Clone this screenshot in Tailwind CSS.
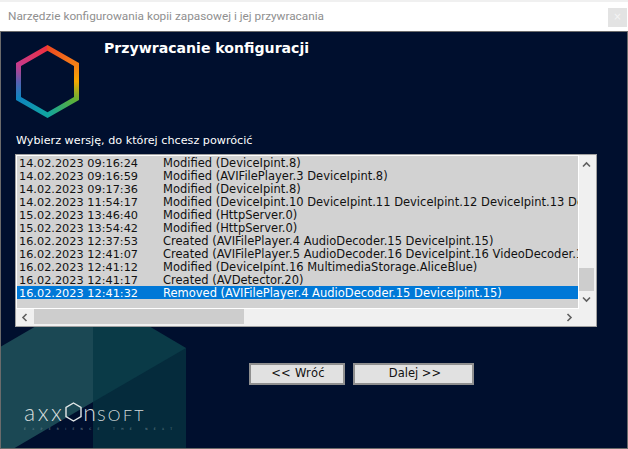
<!DOCTYPE html>
<html lang="en">
<head>
    <meta charset="UTF-8">
    <title>Narzędzie konfigurowania kopii zapasowej i jej przywracania</title>
    <script src="https://cdn.jsdelivr.net/npm/@tailwindcss/browser@4"></script>
</head>
<body class="bg-white font-['DejaVu_Sans',sans-serif] overflow-hidden">
    <div class="w-[628px] h-[449px] flex flex-col">
        <!-- Title bar -->
        <div class="h-[31px] shrink-0 bg-white border-t-2 border-[#f0f0f0] flex items-center justify-between pr-[1px]">
            <span class="pl-[8px] text-[11.8px] text-[#8f8f8f] font-['Roboto',sans-serif]">Narzędzie konfigurowania kopii zapasowej i jej przywracania</span>
            <div class="w-[19px] h-[19px] mt-[1px] bg-[#e3e3e3] flex items-center justify-center text-[10px] leading-none text-[#f4f4f4]">×</div>
        </div>

        <!-- Wizard body -->
        <div class="relative flex-1 bg-[#000f2e] border-t border-x border-[#6b6b6b] overflow-hidden">
            <svg class="absolute left-0 bottom-0" width="190" height="125" viewBox="1 323 190 125">
                <polygon points="93,293 186,348 186,449 93,449" fill="#0a3a47"/>
                <polygon points="186,348 186,449 93,449 93,402" fill="#052b3c"/>
                <polygon points="0,347 93,293 93,402 13,449 0,449" fill="#1b4854"/>
            </svg>

            <!-- Hexagon logo -->
            <div class="absolute left-[15px] top-[13px] w-[63px] h-[73px] bg-[conic-gradient(#ee4a20_0deg,#f58016_60deg,#f5a800_90deg,#5cb038_125deg,#10a5a0_180deg,#0f85c0_240deg,#5a5fb0_270deg,#c83a8a_300deg,#ee3040_360deg)] [clip-path:polygon(evenodd,31.5px_0,63px_18px,63px_55px,31.5px_73px,0_55px,0_18px,31.5px_0,31.5px_5.8px,5px_20.9px,5px_52.1px,31.5px_67.2px,58px_52.1px,58px_20.9px,31.5px_5.8px)]"></div>

            <h1 class="absolute left-[103px] top-[7px] text-[14.1px] leading-[18px] font-bold text-white">Przywracanie konfiguracji</h1>
            <p class="absolute left-[15px] top-[102px] text-[11.2px] leading-[14px] text-white">Wybierz wersję, do której chcesz powrócić</p>

            <!-- Version list -->
            <div class="absolute left-[14px] top-[122px] w-[582px] h-[173px] border border-[#a0a0a0] bg-[#f0f0f0] grid grid-cols-[1fr_17px] grid-rows-[1fr_17px]">
                <div class="bg-[#d2d2d2] overflow-hidden border border-white text-[11.5px] text-[#111]">
                    <div class="flex whitespace-nowrap pl-[2px] h-[13px] leading-[15px]"><span class="w-[144px] shrink-0 text-[11.3px]">14.02.2023 09:16:24</span><span>Modified (DeviceIpint.8)</span></div>
                    <div class="flex whitespace-nowrap pl-[2px] h-[13px] leading-[15px]"><span class="w-[144px] shrink-0 text-[11.3px]">14.02.2023 09:16:59</span><span>Modified (AVIFilePlayer.3 DeviceIpint.8)</span></div>
                    <div class="flex whitespace-nowrap pl-[2px] h-[13px] leading-[15px]"><span class="w-[144px] shrink-0 text-[11.3px]">14.02.2023 09:17:36</span><span>Modified (DeviceIpint.8)</span></div>
                    <div class="flex whitespace-nowrap pl-[2px] h-[13px] leading-[15px]"><span class="w-[144px] shrink-0 text-[11.3px]">14.02.2023 11:54:17</span><span>Modified (DeviceIpint.10 DeviceIpint.11 DeviceIpint.12 DeviceIpint.13 DeviceIpint.14)</span></div>
                    <div class="flex whitespace-nowrap pl-[2px] h-[13px] leading-[15px]"><span class="w-[144px] shrink-0 text-[11.3px]">15.02.2023 13:46:40</span><span>Modified (HttpServer.0)</span></div>
                    <div class="flex whitespace-nowrap pl-[2px] h-[13px] leading-[15px]"><span class="w-[144px] shrink-0 text-[11.3px]">15.02.2023 13:54:42</span><span>Modified (HttpServer.0)</span></div>
                    <div class="flex whitespace-nowrap pl-[2px] h-[13px] leading-[15px]"><span class="w-[144px] shrink-0 text-[11.3px]">16.02.2023 12:37:53</span><span>Created (AVIFilePlayer.4 AudioDecoder.15 DeviceIpint.15)</span></div>
                    <div class="flex whitespace-nowrap pl-[2px] h-[13px] leading-[15px]"><span class="w-[144px] shrink-0 text-[11.3px]">16.02.2023 12:41:07</span><span>Created (AVIFilePlayer.5 AudioDecoder.16 DeviceIpint.16 VideoDecoder.16)</span></div>
                    <div class="flex whitespace-nowrap pl-[2px] h-[13px] leading-[15px]"><span class="w-[144px] shrink-0 text-[11.3px]">16.02.2023 12:41:12</span><span>Modified (DeviceIpint.16 MultimediaStorage.AliceBlue)</span></div>
                    <div class="flex whitespace-nowrap pl-[2px] h-[13px] leading-[15px]"><span class="w-[144px] shrink-0 text-[11.3px]">16.02.2023 12:41:17</span><span>Created (AVDetector.20)</span></div>
                    <div class="flex whitespace-nowrap pl-[2px] h-[13px] leading-[15px] bg-[#0078d7] text-white"><span class="w-[144px] shrink-0 text-[11.3px]">16.02.2023 12:41:32</span><span>Removed (AVIFilePlayer.4 AudioDecoder.15 DeviceIpint.15)</span></div>
                </div>

                <!-- Vertical scrollbar -->
                <div class="relative flex flex-col justify-between items-start pl-[3px] bg-[#f0f0f0]">
                    <svg class="mt-[6px]" width="9" height="7" viewBox="0 0 9 7"><path d="M1 5.5 L4.5 2 L8 5.5" fill="none" stroke="#606060" stroke-width="1.6"/></svg>
                    <div class="absolute left-0 top-[113px] w-[15px] h-[23px] bg-[#cdcdcd]"></div>
                    <svg class="mb-[6px]" width="9" height="7" viewBox="0 0 9 7"><path d="M1 1.5 L4.5 5 L8 1.5" fill="none" stroke="#606060" stroke-width="1.6"/></svg>
                </div>

                <!-- Horizontal scrollbar -->
                <div class="relative flex items-center justify-between bg-[#f0f0f0] pl-[5px] pr-[6px] pb-[1px]">
                    <svg width="7" height="9" viewBox="0 0 7 9"><path d="M5.5 1 L2 4.5 L5.5 8" fill="none" stroke="#606060" stroke-width="1.6"/></svg>
                    <div class="absolute left-[18px] top-0 w-[210px] h-[15px] bg-[#cdcdcd]"></div>
                    <svg width="7" height="9" viewBox="0 0 7 9"><path d="M1.5 1 L5 4.5 L1.5 8" fill="none" stroke="#606060" stroke-width="1.6"/></svg>
                </div>
                <div class="bg-[#f0f0f0]"></div>
            </div>

            <!-- Wizard buttons -->
            <div class="absolute left-[248px] top-[331px] flex gap-[8px] text-[11.5px] text-[#111]">
                <button class="w-[96px] h-[22px] pl-[2px] tracking-[0.3px] bg-[#e1e1e1] border-2 border-[#8f8f8f]">&lt;&lt; Wróć</button>
                <button class="w-[121px] h-[22px] pl-[3px] bg-[#e1e1e1] border-2 border-[#8f8f8f]">Dalej &gt;&gt;</button>
            </div>

            <!-- Vendor logo -->
            <div class="absolute left-[23px] top-[368px] h-[24px] flex items-baseline text-[#d5dcdc] font-['Lato',sans-serif] font-light">
                <span class="text-[23px] leading-[24px] tracking-[2.5px]">axx</span>
                <svg width="17" height="20" viewBox="0 0 17 20" class="mx-[1px] self-center"><polygon points="8.5,1 16,5.5 16,14.5 8.5,19 1,14.5 1,5.5" fill="none" stroke="#e4e9e9" stroke-width="1.4"/></svg>
                <span class="text-[23px] leading-[24px] mr-[1px]">n</span>
                <span class="text-[16px] leading-[24px] tracking-[2.4px]">SOFT</span>
            </div>
            <div class="absolute left-[23px] top-[395px] text-[3px] leading-[4px] tracking-[6.3px] text-[#7a9299] whitespace-nowrap">EXPERIENCE THE NEXT</div>
        </div>
        <div class="h-[1px] shrink-0 bg-[#6b6b6b]"></div>
    </div>
</body>
</html>
